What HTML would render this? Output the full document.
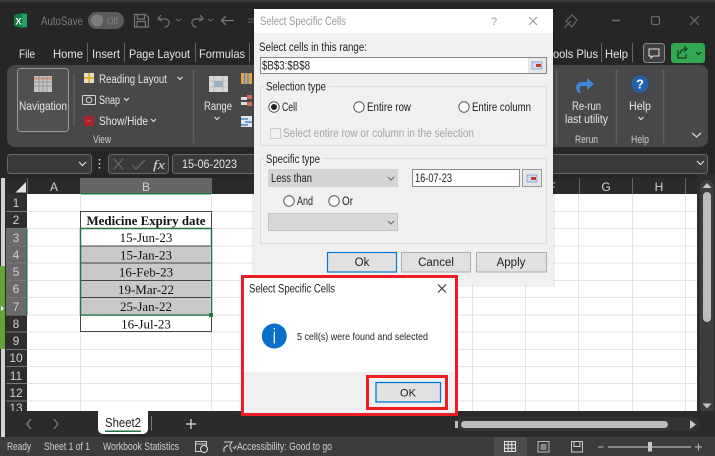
<!DOCTYPE html>
<html><head><meta charset="utf-8"><style>
html,body{margin:0;padding:0;background:#262626}
svg{display:block;position:absolute;left:0;top:0}
text{font-family:"Liberation Sans",sans-serif;font-size:12px;fill:#e6e6e6}
.d{fill:#222}.g{fill:#7c7c7c}.s{font-size:11px;fill:#cfcfcf}.r{font-size:12px;fill:#d0d0d0;text-anchor:middle}
.c{font-family:"Liberation Serif",serif;font-size:13px;fill:#111;text-anchor:middle}
.ch{fill:none;stroke:#ddd;stroke-width:1.2}
.dc{fill:none;stroke:#666;stroke-width:1}
</style></head><body>
<svg width="715" height="456" viewBox="0 0 715 456" xmlns="http://www.w3.org/2000/svg">
<rect width="715" height="456" fill="#262626"/>
<rect x="0" y="0" width="715" height="2" fill="#3a3a3a"/>
<!-- title bar -->
<path d="M14 15l8-2 5 1v13l-5 1-8-2z" fill="#107c41"/><rect x="22" y="14" width="5" height="13" fill="#21a366"/>
<text x="15.500" y="24.500" style="font-size:9px;font-weight:bold;fill:#fff">X</text>
<text x="41" y="25" class="g" textLength="42" lengthAdjust="spacingAndGlyphs">AutoSave</text>
<rect x="88" y="12" width="36" height="17" rx="8.500" fill="#5c5c5c"/><circle cx="97" cy="20.500" r="6" fill="#7d7d7d"/>
<text x="107" y="24.500" class="g" style="font-size:10.500px" textLength="11" lengthAdjust="spacingAndGlyphs">Off</text>
<path d="M134.500 14.500h11l3 3v9.500h-14zM137.500 14.500v4.500h7v-4.500M137 27v-5.500h8.500v5.500" fill="none" stroke="#777" stroke-width="1.200"/>
<path d="M161 15l-3 4 4 2M158.500 19h7c5 0 5 8 -1 8" fill="none" stroke="#707070" stroke-width="1.300"/>
<path d="M176 19l2.500 2 2.500-2" fill="none" stroke="#707070"/>
<path d="M200 15l3 4-4 2M202.500 19h-7c-5 0-5 8 1 8" fill="none" stroke="#707070" stroke-width="1.300"/>
<path d="M208 19l2.500 2 2.500-2" fill="none" stroke="#707070"/>
<path d="M234 20.500h-12M226 16l-4.500 4.500 4.500 4.500" fill="none" stroke="#757575" stroke-width="1.300"/>
<path d="M248 19h6M248 22h6" stroke="#666"/>
<path d="M571 21l-6 6 1 1M572 15l5 5-5 7-6-6z" fill="none" stroke="#666" stroke-width="1.200"/>
<path d="M612 20.500h8" stroke="#6a6a6a" stroke-width="1.500"/>
<rect x="651.500" y="16.500" width="8" height="8" rx="1.500" fill="none" stroke="#6a6a6a" stroke-width="1.200"/>
<path d="M690 16l9 9M699 16l-9 9" stroke="#6a6a6a" stroke-width="1.200"/>
<!-- tabs -->
<text x="19" y="58" textLength="16" lengthAdjust="spacingAndGlyphs">File</text>
<text x="53" y="58" textLength="30" lengthAdjust="spacingAndGlyphs">Home</text>
<text x="92" y="58" textLength="28" lengthAdjust="spacingAndGlyphs">Insert</text>
<text x="129" y="58" textLength="61" lengthAdjust="spacingAndGlyphs">Page Layout</text>
<text x="199" y="58" textLength="46" lengthAdjust="spacingAndGlyphs">Formulas</text>
<text x="553" y="58" textLength="45" lengthAdjust="spacingAndGlyphs">ools Plus</text>
<text x="605" y="58" textLength="23" lengthAdjust="spacingAndGlyphs">Help</text>
<path d="M87.500 43v19M124.500 43v19M195.500 43v19M249.500 43v19M601.500 43v19M632.500 43v19" stroke="#666"/>
<rect x="643.500" y="43.500" width="21" height="19" rx="3" fill="#3f3f3f" stroke="#888"/>
<path d="M649 49h10v7h-6l-2 2v-2h-2z" fill="none" stroke="#e0e0e0"/>
<rect x="671" y="43" width="34" height="20" rx="3" fill="#33a852"/>
<path d="M678 50v8h8v-4M680 54c0-3 2-5 6-5M684 46l3 3-3 3" fill="none" stroke="#143a20" stroke-width="1.200"/>
<path d="M696 52l2.500 2.500 2.500-2.500" fill="none" stroke="#143a20" stroke-width="1.200"/>
<!-- ribbon -->
<rect x="7" y="65" width="701" height="82" rx="8" fill="#484848"/>
<rect x="17.500" y="68.500" width="51" height="63" rx="3" fill="#505050" stroke="#999"/>
<rect x="34" y="76" width="18" height="16" fill="#c4c4c4"/>
<path d="M34 78.500h18" stroke="#d98a7a" stroke-width="2"/>
<path d="M39 76v16M43 76v16M47 76v16M34 82h18M34 86h18" stroke="#8a8a8a" stroke-width=".7"/>
<text x="19" y="110" style="font-size:11.500px" textLength="48" lengthAdjust="spacingAndGlyphs">Navigation</text>
<path d="M74 74v52M193.500 70v73M556.500 70v73M616.500 70v73M663.500 70v73" stroke="#5f5f5f" stroke-width="1.500"/>
<rect x="84" y="73" width="10" height="10" fill="#e8e0c8"/><path d="M89 73v10M84 78h10" stroke="#e6b13c" stroke-width="2"/>
<text x="99" y="83" style="font-size:11.500px" textLength="68" lengthAdjust="spacingAndGlyphs">Reading Layout</text>
<path d="M177.500 77l2.500 2.500 2.500-2.500M124 98l2.500 2.500 2.500-2.500M151 119l2.500 2.500 2.500-2.500M214.500 117l2.500 2.500 2.500-2.500M638.500 117l2.500 2.500 2.500-2.500" class="ch"/>
<rect x="82.500" y="95.500" width="13" height="9" rx="1" fill="none" stroke="#d4d4d4"/><circle cx="89" cy="100" r="2.800" fill="none" stroke="#d4d4d4"/>
<text x="99" y="104" style="font-size:11.500px" textLength="21" lengthAdjust="spacingAndGlyphs">Snap</text>
<rect x="84" y="116" width="10" height="10" fill="#a8242c"/><path d="M86 121h6" stroke="#e08a8a" stroke-dasharray="1 1"/>
<text x="99" y="125" style="font-size:11.500px" textLength="49" lengthAdjust="spacingAndGlyphs">Show/Hide</text>
<text x="93" y="143" class="s" textLength="18" lengthAdjust="spacingAndGlyphs">View</text>
<rect x="209" y="76" width="19" height="16" fill="#d8d8d8"/><rect x="214" y="81" width="9" height="6" fill="#9ab2c8"/>
<path d="M209 81h19M209 87h19M214 76v16M223 76v16" stroke="#aaa" stroke-width=".6"/>
<text x="204" y="110" style="font-size:11.500px" textLength="28" lengthAdjust="spacingAndGlyphs">Range</text>
<rect x="241" y="73" width="11" height="11" fill="#e8a33c"/><path d="M244.500 73v11M248 73v11" stroke="#5a8fd0" stroke-width="1.500"/>
<rect x="241" y="97" width="6" height="3" fill="#ddd"/><rect x="241" y="102" width="6" height="3" fill="#ddd"/><rect x="247" y="95" width="5" height="4" fill="#d0685a"/><rect x="247" y="102" width="5" height="4" fill="#d0685a"/>
<rect x="241" y="116" width="11" height="11" fill="#dfe8f2"/><path d="M241 119h7M245 122h7M241 125h7" stroke="#2f73c0" stroke-width="1.300"/>
<!-- rerun -->
<path d="M579 93c-4-3-4-10 2-11h6v-4l7 6-7 6v-4h-5c-3 0-3 4-1 7z" fill="#3d86d8"/>
<text x="572" y="110" style="font-size:11.500px" textLength="29" lengthAdjust="spacingAndGlyphs">Re-run</text>
<text x="565" y="123" style="font-size:11.500px" textLength="43" lengthAdjust="spacingAndGlyphs">last utility</text>
<text x="575" y="143" class="s" textLength="23" lengthAdjust="spacingAndGlyphs">Rerun</text>
<circle cx="640" cy="84" r="8.500" fill="#1f62ad"/>
<text x="640" y="88.500" style="font-size:13px;font-weight:bold;fill:#fff;text-anchor:middle">?</text>
<text x="629" y="110" style="font-size:11.500px" textLength="22" lengthAdjust="spacingAndGlyphs">Help</text>
<text x="631" y="143" class="s" textLength="18" lengthAdjust="spacingAndGlyphs">Help</text>
<path d="M692 133l4.500 4 4.500-4" class="ch"/>
<!-- formula bar -->
<rect x="7.500" y="154.500" width="84" height="19" rx="3" fill="#3a3a3a" stroke="#686868"/>
<path d="M79 162l3.500 3.500 3.500-3.500" class="ch"/>
<path d="M99.500 159v1.500M99.500 163v1.500M99.500 167v1.500" stroke="#ddd" stroke-width="1.500"/>
<rect x="108.500" y="154.500" width="60" height="19" rx="3" fill="#3a3a3a" stroke="#686868"/>
<path d="M114 159l9 10M123 159l-9 10M132 165l4 4 9-9" fill="none" stroke="#6a6a6a" stroke-width="1.200"/>
<text x="153" y="169" style="font-family:'Liberation Serif',serif;font-style:italic;font-size:13px;fill:#ddd" textLength="12" lengthAdjust="spacingAndGlyphs">fx</text>
<rect x="172.500" y="154.500" width="535" height="19" rx="3" fill="#3a3a3a" stroke="#686868"/>
<text x="182" y="168" style="font-size:11.500px" textLength="55" lengthAdjust="spacingAndGlyphs">15-06-2023</text>
<path d="M697 161l3.500 3.500 3.500-3.500" class="ch"/>
<!-- left strip -->
<rect x="1" y="178" width="4" height="259" fill="#d2d2d2"/>
<rect x="0" y="266" width="5" height="83" fill="#62a33a"/>
<path d="M1 306l3 2.500-3 2.500z" fill="#fff"/>
<!-- grid -->
<rect x="27" y="194" width="670" height="217" fill="#fff"/>
<rect x="6" y="178" width="691" height="16" fill="#2a2a2a"/>
<rect x="6" y="194" width="21" height="217" fill="#2f2f2f"/>
<path d="M26 182v10.500h-10.500z" fill="#e4e4e4"/>
<path d="M27.500 178v16M211.500 178v16M632.500 178v16M685.500 178v16M579.500 178v16" stroke="#666"/>
<rect x="80" y="178" width="131" height="16" fill="#666"/>
<rect x="80" y="193" width="131" height="1.500" fill="#217346"/>
<text x="54" y="191" class="r">A</text><text x="146" y="191" class="r">B</text>
<text x="552" y="191" class="r">F</text><text x="606" y="191" class="r">G</text><text x="659" y="191" class="r">H</text>
<g stroke="#e4e4e4"><path d="M27 211.500h670M27 228.500h670M27 246h670M27 263h670M27 280.500h670M27 297.500h670M27 315h670M27 332h670M27 349.500h670M27 366.500h670M27 383.500h670M27 401h670"/>
<path d="M80.500 194v217M211.500 194v217M264.500 194v217M317.500 194v217M472.500 194v217M525.500 194v217M578.500 194v217M632.500 194v217M685.500 194v217"/></g>
<rect x="6" y="228.500" width="21" height="86.500" fill="#6a6a6a"/><rect x="26" y="228.500" width="1.500" height="86.500" fill="#217346"/>
<g stroke="#777"><path d="M6 211.500h21M6 228.500h21M6 246h21M6 263h21M6 280.500h21M6 297.500h21M6 315h21M6 332h21M6 349.500h21M6 366.500h21M6 383.500h21M6 401h21"/></g>
<text x="16" y="207" class="r">1</text><text x="16" y="224" class="r">2</text><text x="16" y="242" class="r">3</text><text x="16" y="259" class="r">4</text><text x="16" y="276" class="r">5</text><text x="16" y="293" class="r">6</text><text x="16" y="311" class="r">7</text><text x="16" y="328" class="r">8</text><text x="16" y="345" class="r">9</text><text x="16" y="362" class="r">10</text><text x="16" y="380" class="r">11</text><text x="16" y="397" class="r">12</text><text x="16" y="412" class="r">13</text>
<!-- cells -->
<rect x="81" y="246" width="129" height="68" fill="#c9c9c9"/>
<g stroke="#444" fill="none"><path d="M80.500 211.500h131v120h-131zM80.500 228.500h131M80.500 246h131M80.500 263h131M80.500 280.500h131M80.500 297.500h131M80.500 315h131"/></g>
<rect x="80.500" y="228.500" width="131" height="86.500" fill="none" stroke="#217346" stroke-width="1.500"/>
<rect x="209" y="313" width="4" height="4" fill="#217346"/>
<text x="146" y="225" class="c" style="font-weight:bold" textLength="119" lengthAdjust="spacingAndGlyphs">Medicine Expiry date</text>
<text x="146" y="242" class="c">15-Jun-23</text><text x="146" y="259.500" class="c">15-Jan-23</text><text x="146" y="276.500" class="c">16-Feb-23</text><text x="146" y="294" class="c">19-Mar-22</text><text x="146" y="311" class="c">25-Jan-22</text><text x="146" y="328.500" class="c">16-Jul-23</text>
<!-- vscroll -->
<rect x="697" y="174" width="18" height="263" fill="#2e2e2e"/>
<rect x="700" y="180" width="14" height="234" rx="7" fill="#3d3d3d"/>
<path d="M702.500 188l4.500-5 4.500 5z" fill="#c6c6c6"/>
<rect x="703" y="192" width="8" height="130" rx="4" fill="#bcbcbc"/>
<path d="M702.500 403.500l4.500 5 4.500-5z" fill="#c6c6c6"/>
<!-- sheet tabs -->
<rect x="6" y="411" width="709" height="26" fill="#2b2b2b"/>
<path d="M31 419l-4 5 4 5M54 419l4 5-4 5" fill="none" stroke="#888" stroke-width="1.100"/>
<path d="M98 411h50v18a5 5 0 0 1-5 5h-40a5 5 0 0 1-5-5z" fill="#fff"/>
<text x="105" y="427" class="d" style="font-size:12.500px" textLength="36" lengthAdjust="spacingAndGlyphs">Sheet2</text>
<rect x="105" y="430.500" width="36" height="1.500" fill="#217346"/>
<path d="M151.500 416v15" stroke="#777"/>
<path d="M186 424h10M191 419v10" stroke="#ddd" stroke-width="1.300"/>
<rect x="455" y="417" width="245" height="14" rx="7" fill="#333"/>
<rect x="461" y="421" width="207" height="7" rx="3.500" fill="#bcbcbc"/>
<rect x="455" y="421" width="3" height="7" fill="#bcbcbc"/>
<path d="M690 420l6 4.500-6 4.500z" fill="#c6c6c6"/>
<!-- status bar -->
<rect x="0" y="437" width="715" height="19" fill="#3c3c3c"/>
<text x="7" y="450" class="s" textLength="24" lengthAdjust="spacingAndGlyphs">Ready</text>
<text x="44" y="450" class="s" textLength="46" lengthAdjust="spacingAndGlyphs">Sheet 1 of 1</text>
<text x="103" y="450" class="s" textLength="76" lengthAdjust="spacingAndGlyphs">Workbook Statistics</text>
<rect x="195.500" y="441.500" width="11" height="10" fill="none" stroke="#ccc"/><circle cx="204" cy="449" r="3.500" fill="#3c3c3c" stroke="#ddd"/><path d="M196 444h10" stroke="#ccc"/>
<path d="M224 442h8l-2 3v3l2 4M228 445l-4 3v4M233 447l1.500 1.500 2-3" fill="none" stroke="#ccc" stroke-width="1.100"/>
<text x="237" y="450" class="s" textLength="95" lengthAdjust="spacingAndGlyphs">Accessibility: Good to go</text>
<rect x="494" y="437" width="33" height="19" fill="#4d4d4d"/>
<path d="M504.500 441.500h11v10h-11zM504.500 444.800h11M504.500 448.200h11M508.200 441.500v10M511.800 441.500v10" fill="none" stroke="#e4e4e4"/>
<rect x="538" y="441.500" width="11" height="10.500" fill="none" stroke="#bbb"/><rect x="540.500" y="444" width="6" height="6" fill="#888"/>
<path d="M571.500 452v-10.500h11v10.500zM574 441.500v5h6v-5" fill="none" stroke="#ccc"/>
<path d="M598 447h5.500M695 447h7M698.500 443.500v7" stroke="#bbb"/>
<rect x="608" y="446" width="83" height="2" fill="#888"/>
<rect x="648" y="442" width="4" height="9.500" fill="#c8c8c8"/>
<!-- dialog 1 -->
<rect x="252" y="8" width="303" height="279" fill="#000" opacity=".06"/>
<rect x="254" y="9" width="299" height="276" fill="#f0f0f0"/>
<rect x="254" y="9" width="299" height="24" fill="#fff"/>
<text x="260" y="25" style="font-size:11.500px;fill:#999" textLength="86" lengthAdjust="spacingAndGlyphs">Select Specific Cells</text>
<text x="491" y="25" style="font-size:11px;fill:#999">?</text>
<path d="M529 17l8 8M537 17l-8 8" stroke="#999"/>
<text x="259" y="51" class="d" style="font-size:11.500px" textLength="108" lengthAdjust="spacingAndGlyphs">Select cells in this range:</text>
<rect x="260.500" y="57.500" width="286" height="16" fill="#fff" stroke="#888"/>
<rect x="528" y="58" width="18" height="15" fill="#e8e8e8"/>
<rect x="532" y="62" width="10" height="7" fill="#cfe0f4" stroke="#5f84b8" stroke-width=".6"/><rect x="536" y="64" width="5" height="3" fill="#d0342c"/>
<text x="262" y="69.500" class="d" style="font-size:11.500px" textLength="48" lengthAdjust="spacingAndGlyphs">$B$3:$B$8</text>
<rect x="260.500" y="86.500" width="286" height="59" fill="none" stroke="#dcdcdc"/>
<rect x="264" y="84" width="65" height="6" fill="#f0f0f0"/>
<text x="266" y="90.500" class="d" style="font-size:11.500px" textLength="60" lengthAdjust="spacingAndGlyphs">Selection type</text>
<g fill="#fff" stroke="#555"><circle cx="274" cy="107" r="5.200"/><circle cx="359" cy="107" r="5.200"/><circle cx="464" cy="107" r="5.200"/><circle cx="289" cy="201" r="5.200"/><circle cx="334" cy="201" r="5.200"/></g>
<circle cx="274" cy="107" r="3" fill="#222"/>
<text x="282" y="111" class="d" style="font-size:11.500px" textLength="15" lengthAdjust="spacingAndGlyphs">Cell</text>
<text x="367" y="111" class="d" style="font-size:11.500px" textLength="44" lengthAdjust="spacingAndGlyphs">Entire row</text>
<text x="472" y="111" class="d" style="font-size:11.500px" textLength="59" lengthAdjust="spacingAndGlyphs">Entire column</text>
<rect x="270.500" y="128.500" width="10" height="10" fill="#f0f0f0" stroke="#ccc"/>
<text x="283" y="137" style="font-size:11.500px;fill:#a5a5a5" textLength="191" lengthAdjust="spacingAndGlyphs">Select entire row or column in the selection</text>
<rect x="260.500" y="158.500" width="286" height="85" fill="none" stroke="#dcdcdc"/>
<rect x="264" y="156" width="60" height="6" fill="#f0f0f0"/>
<text x="266" y="163" class="d" style="font-size:11.500px" textLength="54" lengthAdjust="spacingAndGlyphs">Specific type</text>
<rect x="268" y="169" width="130" height="18" fill="#d4d4d4"/>
<text x="271" y="182" class="d" style="font-size:11.500px" textLength="41" lengthAdjust="spacingAndGlyphs">Less than</text>
<path d="M388 177l3 3 3-3M509 177l3 3 3-3" class="dc"/>
<rect x="412.500" y="169.500" width="107" height="17" fill="#fff" stroke="#888"/>
<text x="415" y="182" class="d" style="font-size:11.500px" textLength="37" lengthAdjust="spacingAndGlyphs">16-07-23</text>
<rect x="522.500" y="169.500" width="19" height="17" fill="#e6e6e6" stroke="#999"/>
<rect x="527" y="175" width="10" height="7" fill="#cfe0f4" stroke="#5f84b8" stroke-width=".6"/><rect x="531" y="177" width="5" height="3" fill="#d0342c"/>
<text x="297" y="205" class="d" style="font-size:11.500px" textLength="16" lengthAdjust="spacingAndGlyphs">And</text>
<text x="342" y="205" class="d" style="font-size:11.500px" textLength="11" lengthAdjust="spacingAndGlyphs">Or</text>
<rect x="268.500" y="213.500" width="129" height="17" fill="#d8d8d8" stroke="#c4c4c4"/>
<path d="M388 221l3 3 3-3" class="dc"/>
<rect x="327.500" y="252.500" width="69" height="19.500" fill="#e1e1e1" stroke="#0078d7" stroke-width="1.200"/>
<rect x="401.500" y="252.500" width="69" height="19.500" fill="#e1e1e1" stroke="#adadad"/>
<rect x="476.500" y="252.500" width="70" height="19.500" fill="#e1e1e1" stroke="#adadad"/>
<text x="362" y="266" class="d" style="font-size:11.500px;text-anchor:middle">Ok</text>
<text x="436" y="266" class="d" style="font-size:11.500px;text-anchor:middle">Cancel</text>
<text x="511" y="266" class="d" style="font-size:11.500px;text-anchor:middle">Apply</text>
<!-- dialog 2 -->
<rect x="242.500" y="276.500" width="214" height="138" fill="#fff"/>
<rect x="243" y="372" width="213" height="41" fill="#f0f0f0"/>
<rect x="242.500" y="276.500" width="214" height="138" fill="none" stroke="#ee1c25" stroke-width="3"/>
<text x="249" y="292.500" class="d" style="font-size:11.500px" textLength="86" lengthAdjust="spacingAndGlyphs">Select Specific Cells</text>
<path d="M438 284.500l8 8M446 284.500l-8 8" stroke="#333" stroke-width="1.100"/>
<circle cx="274.300" cy="336" r="12.500" fill="#0a6fc9"/>
<path d="M274.300 331.500v12" stroke="#fff" stroke-width="1.200"/><rect x="273.700" y="328" width="1.300" height="1.500" fill="#fff"/>
<text x="297" y="340" class="d" style="font-size:10.500px" textLength="131" lengthAdjust="spacingAndGlyphs">5 cell(s) were found and selected</text>
<rect x="367.500" y="376.500" width="79" height="32" fill="none" stroke="#ee1c25" stroke-width="3"/>
<rect x="376" y="382.500" width="64.500" height="19.500" fill="#e1e1e1" stroke="#0078d7" stroke-width="1.300"/>
<text x="408" y="396.500" class="d" style="font-size:11px;text-anchor:middle">OK</text>
</svg>
</body></html>
